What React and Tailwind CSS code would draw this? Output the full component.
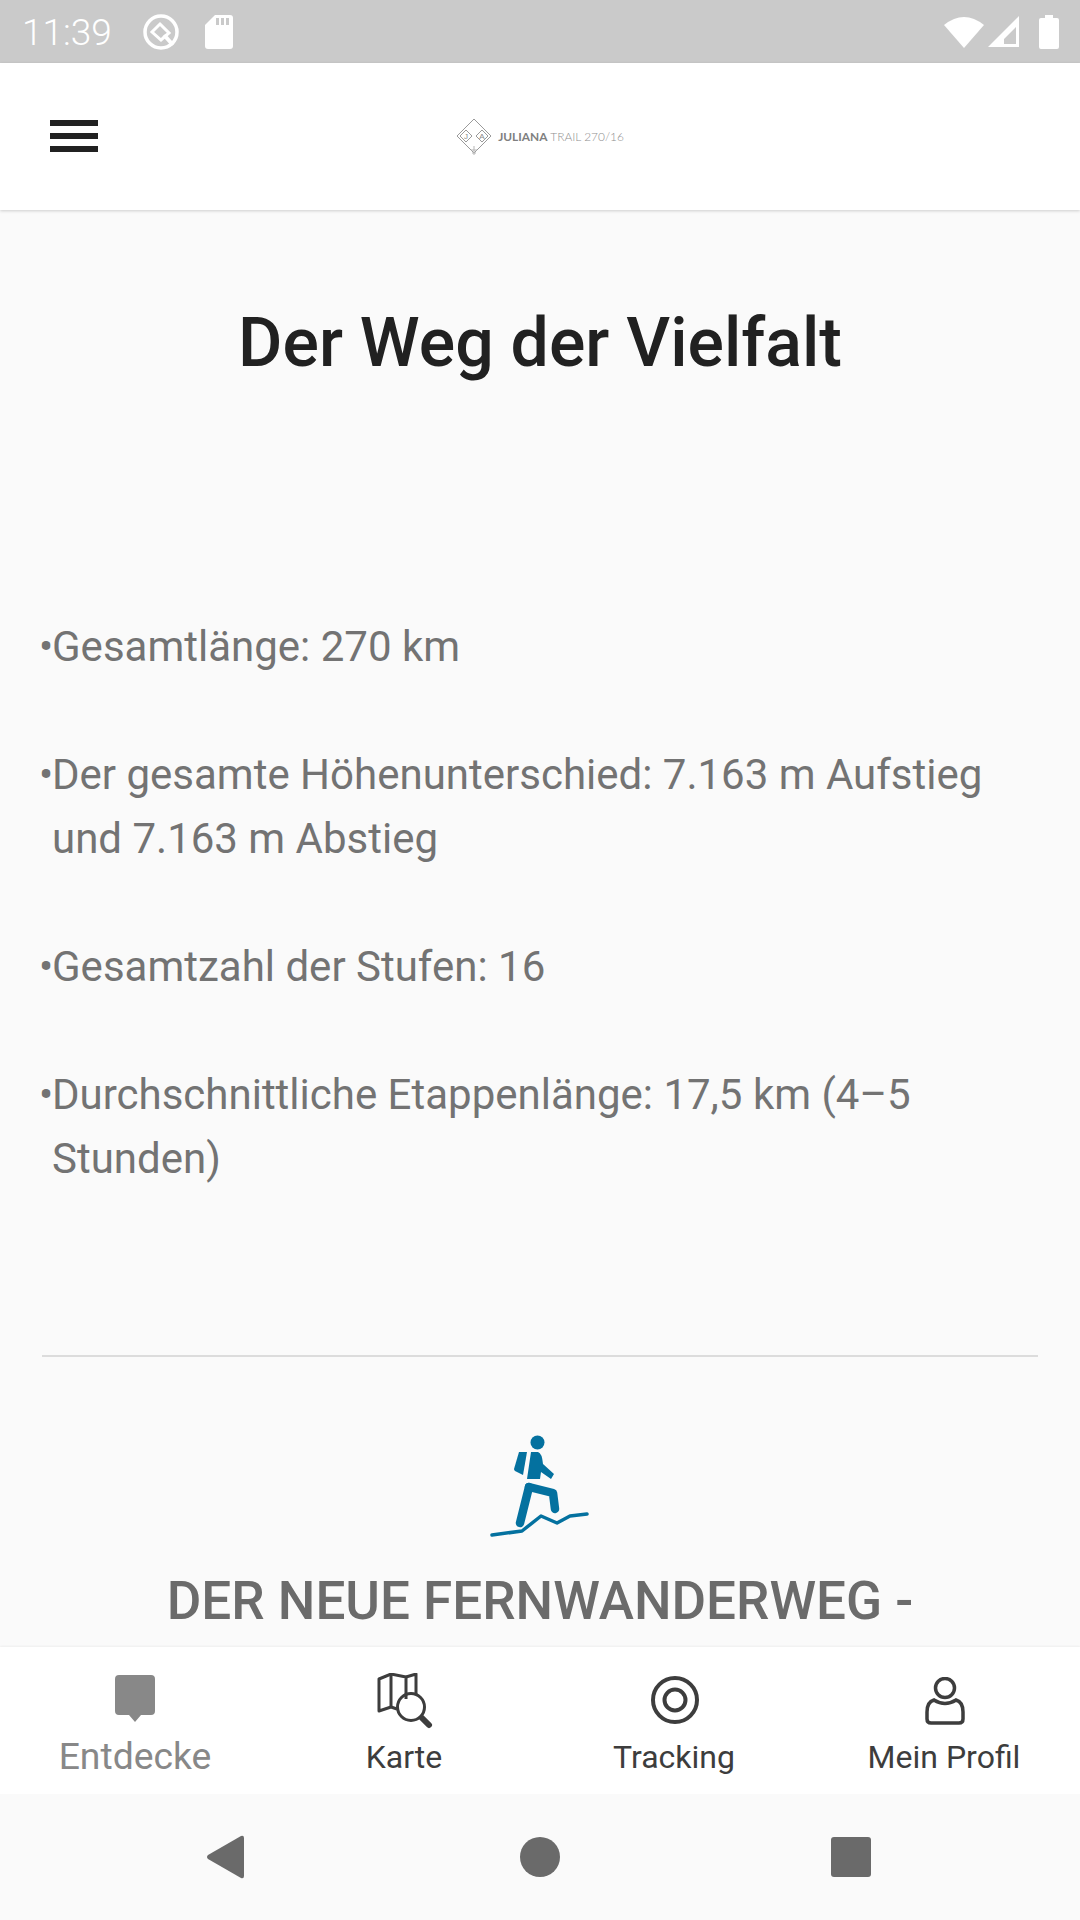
import React from 'react';

const facts = [
  { lines: ['Gesamtlänge: 270 km'] },
  { lines: ['Der gesamte Höhenunterschied: 7.163 m Aufstieg', 'und 7.163 m Abstieg'] },
  { lines: ['Gesamtzahl der Stufen: 16'] },
  { lines: ['Durchschnittliche Etappenlänge: 17,5 km (4–5', 'Stunden)'] },
];

const StatusBar = () => (
  <div className="h-[63px] shrink-0 bg-[#cacaca] flex items-center pl-[22px] pr-[21px] text-white">
    <span className="text-[37px] font-light leading-none w-[120px] mt-[2px]">11:39</span>
    <svg width="38" height="38" viewBox="0 0 38 38">
      <circle cx="19" cy="19" r="16" fill="none" stroke="#fff" strokeWidth="3.5" />
      <path d="M18 11 L27 20 L19 27 L10 19 Z" fill="none" stroke="#fff" strokeWidth="3" />
      <path d="M22 22 L31 32" stroke="#fff" strokeWidth="4" />
    </svg>
    <svg width="28" height="34" viewBox="0 0 28 34" className="ml-[25px]">
      <path d="M10 0 H25 Q28 0 28 3 V31 Q28 34 25 34 H3 Q0 34 0 31 V10 Z" fill="#fff" />
      <rect x="11" y="3" width="3" height="7" fill="#cacaca" />
      <rect x="16" y="3" width="3" height="7" fill="#cacaca" />
      <rect x="21" y="3" width="3" height="7" fill="#cacaca" />
    </svg>
    <div className="flex-1" />
    <svg width="40" height="32" viewBox="0 0 40 32">
      <path d="M0 9 Q20 -7 40 9 L20 32 Z" fill="#fff" />
    </svg>
    <svg width="34" height="33" viewBox="0 0 34 33" className="ml-[3px]">
      <path d="M32 1 V32 H1 Z M29 12 L17 24 V29 H29 Z" fill="#fff" fillRule="evenodd" />
    </svg>
    <svg width="20" height="34" viewBox="0 0 20 34" className="ml-[18px]">
      <path d="M6 0 H14 V3 H18 Q20 3 20 5 V32 Q20 34 18 34 H2 Q0 34 0 32 V5 Q0 3 2 3 H6 Z" fill="#fff" />
    </svg>
  </div>
);

const Logo = () => (
  <div className="flex items-center gap-[6px]">
    <svg width="36" height="38" viewBox="0 0 36 38">
      <g fill="none" stroke="#9a9a9a" strokeWidth="1">
        <path d="M18 1 L35 18 L18 35 L1 18 Z" />
        <path d="M10 12 L16 18 L10 24 L4 18 Z" />
        <path d="M26 12 L32 18 L26 24 L20 18 Z" />
      </g>
      <path d="M18 28 V37 M15 32 H21 M16 35 H20" stroke="#b5b5b5" strokeWidth="1" />
      <text x="10" y="21" fontSize="8" textAnchor="middle" fill="#8a8a8a" fontFamily="Liberation Sans, sans-serif">J</text>
      <text x="26" y="21" fontSize="8" textAnchor="middle" fill="#8a8a8a" fontFamily="Liberation Sans, sans-serif">A</text>
    </svg>
    <span className="text-[11.9px] leading-none font-light text-[#8f8f8f] whitespace-nowrap font-['Lato',sans-serif]">
      <span className="font-bold text-[#808080]">JULIANA</span> TRAIL 270/16
    </span>
  </div>
);

const Header = () => (
  <header className="h-[147px] shrink-0 bg-white relative flex items-center justify-center shadow-[0_1px_3px_rgba(0,0,0,0.18)]">
    <div className="absolute left-[50px] top-[57px] w-[48px] flex flex-col gap-[7px]">
      <div className="h-[6px] bg-[#212121]" />
      <div className="h-[6px] bg-[#212121]" />
      <div className="h-[6px] bg-[#212121]" />
    </div>
    <Logo />
  </header>
);

const Hiker = () => (
  <svg width="160" height="130" viewBox="0 0 160 130" className="mx-auto">
    <g fill="#04719f">
      <circle cx="77.5" cy="22.5" r="7" />
      <path d="M59 32 H67 L63 55 L55 51 Q54 50 54 49 Z" />
      <path d="M71 32 H78 Q82 33 83 44 L94 54 L91 59 L81 52 L80 59 H67 Z" />
    </g>
    <g fill="none" stroke="#04719f" strokeLinecap="round" strokeLinejoin="round">
      <path d="M69 67 L60 103" strokeWidth="8.5" />
      <path d="M69 67 L93 73 L95 89" strokeWidth="8.5" />
      <path d="M32 115 L62 111 L81 96 L97 103 L110 96 L127 94" strokeWidth="3.5" />
    </g>
  </svg>
);

const Tab = ({ label, active, children }) => (
  <div className="flex-1 flex flex-col items-center">
    <div className="h-[60px] mt-[24px] flex items-center justify-center">{children}</div>
    <span
      className={
        active
          ? 'text-[37.3px] leading-[40px] mt-[5px] text-[#888888]'
          : 'text-[32px] leading-[40px] mt-[6px] -ml-[2px] text-[#3d3d3d]'
      }
    >
      {label}
    </span>
  </div>
);

const TabBar = () => (
  <nav className="h-[147px] shrink-0 bg-white flex relative shadow-[0_-1px_2px_rgba(0,0,0,0.05)]">
    <Tab label="Entdecke" active>
      <svg width="40" height="48" viewBox="0 0 40 48" className="-mt-[4px]">
        <path d="M4 0 H36 Q40 0 40 4 V36 Q40 40 36 40 H26 L20 47 L14 40 H4 Q0 40 0 36 V4 Q0 0 4 0 Z" fill="#888888" />
      </svg>
    </Tab>
    <Tab label="Karte">
      <svg width="56" height="56" viewBox="0 0 56 56" fill="none" stroke="#3d3d3d" strokeWidth="3" strokeLinejoin="round">
        <path d="M29 26 V4 L14 1 L2 6 V38 L14 34 L20 36" />
        <path d="M14 1 V34" />
        <path d="M29 4 L39 1 V22" />
        <circle cx="34" cy="34" r="13.5" />
        <path d="M45 45 L52 52" strokeWidth="6" strokeLinecap="round" />
      </svg>
    </Tab>
    <Tab label="Tracking">
      <svg width="48" height="48" viewBox="0 0 48 48" fill="none" stroke="#3d3d3d" strokeWidth="4" className="-mt-[2px] -ml-[1px]">
        <circle cx="24" cy="24" r="22" />
        <circle cx="24" cy="24" r="10.5" />
      </svg>
    </Tab>
    <Tab label="Mein Profil">
      <svg width="40" height="48" viewBox="0 0 40 48" fill="none" stroke="#3d3d3d" strokeWidth="3.5">
        <circle cx="20" cy="11" r="9.5" />
        <path d="M9 23 Q20 30 31 23 Q38 25 38 35 V42 Q38 46 34 46 H6 Q2 46 2 42 V35 Q2 25 9 23 Z" />
      </svg>
    </Tab>
  </nav>
);

const NavBar = () => (
  <div className="h-[126px] shrink-0 bg-[#fafafa] flex items-center pl-[206px]">
    <svg width="38" height="44" viewBox="0 0 38 44">
      <path d="M35 1 Q38 0 38 3 V41 Q38 44 35 43 L2 24 Q0 22 2 20 Z" fill="#6a6a6a" />
    </svg>
    <div className="w-[40px] h-[40px] rounded-full bg-[#6a6a6a] ml-[276px]" />
    <div className="w-[40px] h-[40px] rounded-[3px] bg-[#6a6a6a] ml-[271px]" />
  </div>
);

export default function App() {
  return (
    <div className="w-[1080px] h-[1920px] flex flex-col bg-[#fafafa] overflow-hidden font-['Roboto',sans-serif]">
      <StatusBar />
      <Header />
      <main className="flex-1 min-h-0 overflow-hidden px-[42px]">
        <h1 className="text-[68px] leading-[78px] font-medium text-[#212121] text-center mt-[94px]">
          Der Weg der Vielfalt
        </h1>
        <div className="mt-[233px] text-[42px] leading-[64px] text-[#737373]">
          {facts.map((fact) => (
            <div key={fact.lines[0]} className="relative pl-[10px] mb-[64px]">
              <span className="absolute -left-[3px] top-0 tracking-[-6px]">•</span>
              {fact.lines.map((line) => (
                <div key={line}>{line}</div>
              ))}
            </div>
          ))}
        </div>
        <div className="h-[2px] bg-[#dcdcdc] mt-[164px]" />
        <div className="mt-[63px]">
          <Hiker />
        </div>
        <h2 className="text-[53px] leading-[60px] font-medium text-[#6b6b6b] text-center mt-[21px] whitespace-nowrap">
          DER NEUE FERNWANDERWEG -
        </h2>
      </main>
      <TabBar />
      <NavBar />
    </div>
  );
}
